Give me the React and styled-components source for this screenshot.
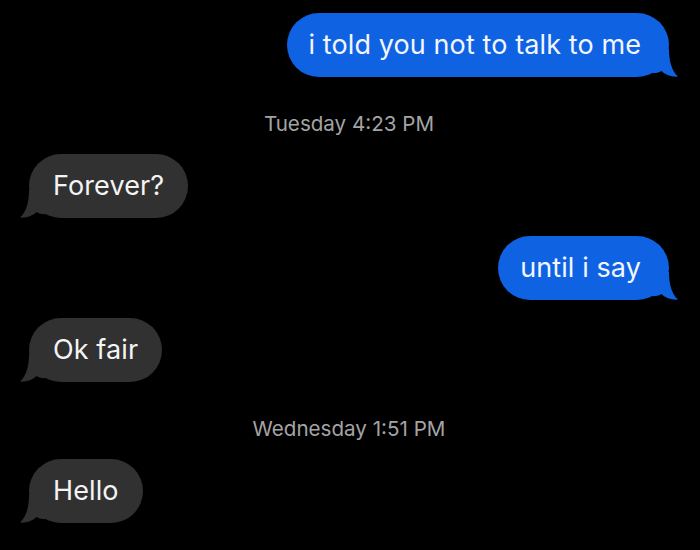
import React from "react";
import styled, { createGlobalStyle } from "styled-components";

const Global = createGlobalStyle`
  html, body {
    margin: 0;
    padding: 0;
    background: #000;
  }
  body {
    font-family: Inter, "Noto Sans", "Liberation Sans", sans-serif;
    -webkit-font-smoothing: antialiased;
  }
`;

const Screen = styled.div`
  width: 700px;
  height: 550px;
  background: #000;
  overflow: hidden;
  box-sizing: border-box;
  padding: 13px 31px 0 29px;
`;

const Thread = styled.div`
  display: flex;
  flex-direction: column;
  gap: 18px;
`;

const Row = styled.div`
  display: flex;
  justify-content: ${(p) => (p.$mine ? "flex-end" : "flex-start")};
`;

const Bubble = styled.div`
  position: relative;
  box-sizing: border-box;
  height: 64px;
  padding: ${(p) => (p.$mine ? "0 28px 0 22px" : "0 24px 0 24px")};
  border-radius: 32px;
  display: flex;
  align-items: center;
  font-size: 27px;
  line-height: 32px;
  letter-spacing: 0.1px;
  color: ${(p) => (p.$mine ? "#f2f6ff" : "#f4f4f4")};
  background: ${(p) => (p.$mine ? "#0f62e2" : "#313132")};
`;

const TailSvg = styled.svg`
  position: absolute;
  bottom: 0;
  width: 26px;
  height: 28px;
  ${(p) =>
    p.$mine
      ? "right: -10px;"
      : "left: -10px; transform: scaleX(-1);"}
`;

const Timestamp = styled.div`
  padding-top: 17px;
  text-align: center;
  font-size: 20.6px;
  line-height: 24px;
  color: #a4a4a6;
`;

function Tail({ mine }) {
  return (
    <TailSvg $mine={mine} viewBox="0 0 26 28" aria-hidden="true">
      <path
        d="M0,0 H16 C16,12 18.5,21.5 25,27.6 C19,28.2 12.5,26 8.5,22 C6,23.5 3,24.2 0,24.2 Z"
        fill={mine ? "#0f62e2" : "#313132"}
      />
    </TailSvg>
  );
}

function Message({ mine, children }) {
  return (
    <Row $mine={mine}>
      <Bubble $mine={mine}>
        {children}
        <Tail mine={mine} />
      </Bubble>
    </Row>
  );
}

export default function App() {
  return (
    <>
      <Global />
      <Screen>
        <Thread>
          <Message mine>i told you not to talk to me</Message>
          <Timestamp>Tuesday 4:23 PM</Timestamp>
          <Message>Forever?</Message>
          <Message mine>until i say</Message>
          <Message>Ok fair</Message>
          <Timestamp>Wednesday 1:51 PM</Timestamp>
          <Message>Hello</Message>
        </Thread>
      </Screen>
    </>
  );
}
